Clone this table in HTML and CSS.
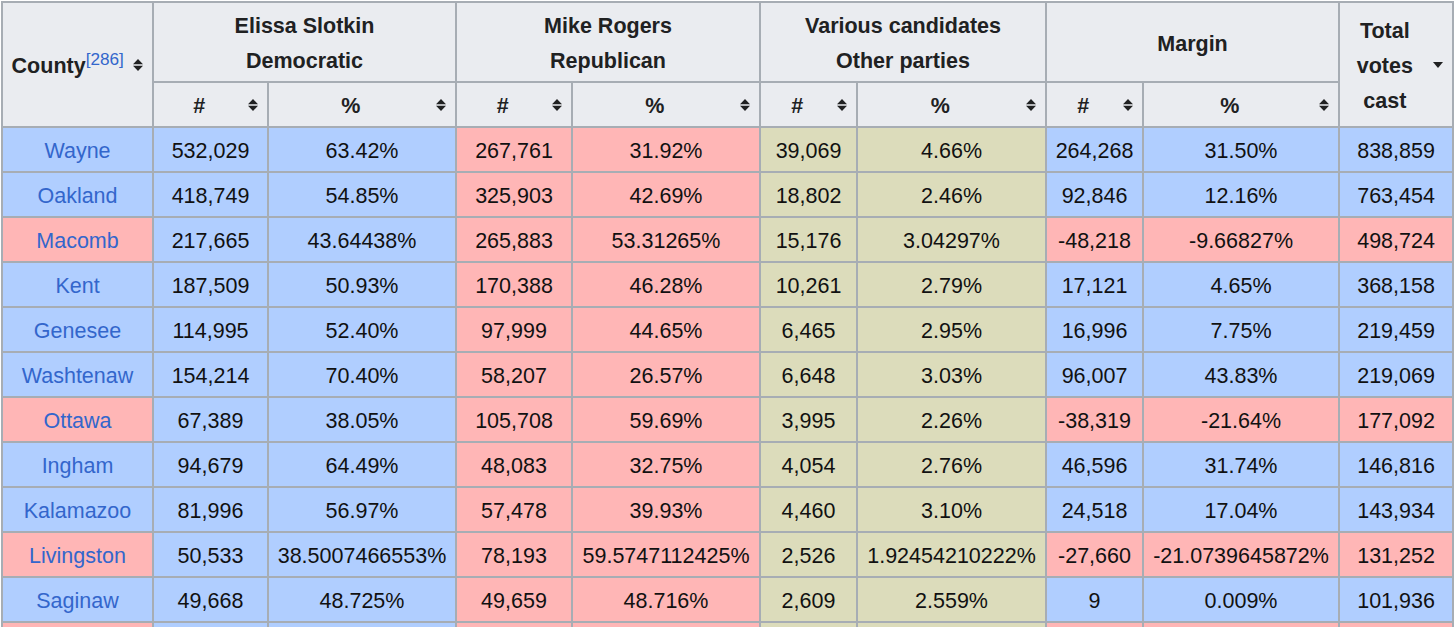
FILE: index.html
```html
<!DOCTYPE html>
<html lang="en">
<head>
<meta charset="utf-8">
<title>2024 United States Senate election in Michigan – results by county</title>
<link rel="stylesheet" href="styles.css">
</head>
<body>
<table class="results">
  <colgroup>
    <col class="w-county"><col class="w-num"><col class="w-pct">
    <col class="w-num2"><col class="w-pct"><col class="w-num3">
    <col class="w-pct3"><col class="w-num3"><col class="w-pct4"><col class="w-total">
  </colgroup>
  <thead>
    <tr class="hrow1">
      <th rowspan="2" class="sortable">County<sup class="ref"><a href="#">[286]</a></sup><svg class="sort" viewBox="0 0 10 12" width="10" height="12"><path d="M0 5.3 L5 0 L10 5.3 Z M0 6.7 L10 6.7 L5 12 Z"/></svg></th>
      <th colspan="2">Elissa Slotkin<br>Democratic</th>
      <th colspan="2">Mike Rogers<br>Republican</th>
      <th colspan="2">Various candidates<br>Other parties</th>
      <th colspan="2">Margin</th>
      <th rowspan="2" class="sortable">Total votes cast<svg class="sort" viewBox="0 0 10 6" width="10" height="6"><path d="M0 0 L10 0 L5 6 Z"/></svg></th>
    </tr>
    <tr class="hrow2">
      <th class="sortable">#<svg class="sort" viewBox="0 0 10 12" width="10" height="12"><path d="M0 5.3 L5 0 L10 5.3 Z M0 6.7 L10 6.7 L5 12 Z"/></svg></th>
      <th class="sortable">%<svg class="sort" viewBox="0 0 10 12" width="10" height="12"><path d="M0 5.3 L5 0 L10 5.3 Z M0 6.7 L10 6.7 L5 12 Z"/></svg></th>
      <th class="sortable">#<svg class="sort" viewBox="0 0 10 12" width="10" height="12"><path d="M0 5.3 L5 0 L10 5.3 Z M0 6.7 L10 6.7 L5 12 Z"/></svg></th>
      <th class="sortable">%<svg class="sort" viewBox="0 0 10 12" width="10" height="12"><path d="M0 5.3 L5 0 L10 5.3 Z M0 6.7 L10 6.7 L5 12 Z"/></svg></th>
      <th class="sortable">#<svg class="sort" viewBox="0 0 10 12" width="10" height="12"><path d="M0 5.3 L5 0 L10 5.3 Z M0 6.7 L10 6.7 L5 12 Z"/></svg></th>
      <th class="sortable">%<svg class="sort" viewBox="0 0 10 12" width="10" height="12"><path d="M0 5.3 L5 0 L10 5.3 Z M0 6.7 L10 6.7 L5 12 Z"/></svg></th>
      <th class="sortable">#<svg class="sort" viewBox="0 0 10 12" width="10" height="12"><path d="M0 5.3 L5 0 L10 5.3 Z M0 6.7 L10 6.7 L5 12 Z"/></svg></th>
      <th class="sortable">%<svg class="sort" viewBox="0 0 10 12" width="10" height="12"><path d="M0 5.3 L5 0 L10 5.3 Z M0 6.7 L10 6.7 L5 12 Z"/></svg></th>
    </tr>
  </thead>
  <tbody>
    <tr>
      <td class="d"><a href="#">Wayne</a></td><td class="d">532,029</td><td class="d">63.42%</td>
      <td class="r">267,761</td><td class="r">31.92%</td><td class="o">39,069</td><td class="o">4.66%</td>
      <td class="d">264,268</td><td class="d">31.50%</td><td class="d">838,859</td>
    </tr>
    <tr>
      <td class="d"><a href="#">Oakland</a></td><td class="d">418,749</td><td class="d">54.85%</td>
      <td class="r">325,903</td><td class="r">42.69%</td><td class="o">18,802</td><td class="o">2.46%</td>
      <td class="d">92,846</td><td class="d">12.16%</td><td class="d">763,454</td>
    </tr>
    <tr>
      <td class="r"><a href="#">Macomb</a></td><td class="d">217,665</td><td class="d">43.64438%</td>
      <td class="r">265,883</td><td class="r">53.31265%</td><td class="o">15,176</td><td class="o">3.04297%</td>
      <td class="r">-48,218</td><td class="r">-9.66827%</td><td class="r">498,724</td>
    </tr>
    <tr>
      <td class="d"><a href="#">Kent</a></td><td class="d">187,509</td><td class="d">50.93%</td>
      <td class="r">170,388</td><td class="r">46.28%</td><td class="o">10,261</td><td class="o">2.79%</td>
      <td class="d">17,121</td><td class="d">4.65%</td><td class="d">368,158</td>
    </tr>
    <tr>
      <td class="d"><a href="#">Genesee</a></td><td class="d">114,995</td><td class="d">52.40%</td>
      <td class="r">97,999</td><td class="r">44.65%</td><td class="o">6,465</td><td class="o">2.95%</td>
      <td class="d">16,996</td><td class="d">7.75%</td><td class="d">219,459</td>
    </tr>
    <tr>
      <td class="d"><a href="#">Washtenaw</a></td><td class="d">154,214</td><td class="d">70.40%</td>
      <td class="r">58,207</td><td class="r">26.57%</td><td class="o">6,648</td><td class="o">3.03%</td>
      <td class="d">96,007</td><td class="d">43.83%</td><td class="d">219,069</td>
    </tr>
    <tr>
      <td class="r"><a href="#">Ottawa</a></td><td class="d">67,389</td><td class="d">38.05%</td>
      <td class="r">105,708</td><td class="r">59.69%</td><td class="o">3,995</td><td class="o">2.26%</td>
      <td class="r">-38,319</td><td class="r">-21.64%</td><td class="r">177,092</td>
    </tr>
    <tr>
      <td class="d"><a href="#">Ingham</a></td><td class="d">94,679</td><td class="d">64.49%</td>
      <td class="r">48,083</td><td class="r">32.75%</td><td class="o">4,054</td><td class="o">2.76%</td>
      <td class="d">46,596</td><td class="d">31.74%</td><td class="d">146,816</td>
    </tr>
    <tr>
      <td class="d"><a href="#">Kalamazoo</a></td><td class="d">81,996</td><td class="d">56.97%</td>
      <td class="r">57,478</td><td class="r">39.93%</td><td class="o">4,460</td><td class="o">3.10%</td>
      <td class="d">24,518</td><td class="d">17.04%</td><td class="d">143,934</td>
    </tr>
    <tr>
      <td class="r"><a href="#">Livingston</a></td><td class="d">50,533</td><td class="d">38.5007466553%</td>
      <td class="r">78,193</td><td class="r">59.5747112425%</td><td class="o">2,526</td><td class="o">1.92454210222%</td>
      <td class="r">-27,660</td><td class="r">-21.0739645872%</td><td class="r">131,252</td>
    </tr>
    <tr>
      <td class="d"><a href="#">Saginaw</a></td><td class="d">49,668</td><td class="d">48.725%</td>
      <td class="r">49,659</td><td class="r">48.716%</td><td class="o">2,609</td><td class="o">2.559%</td>
      <td class="d">9</td><td class="d">0.009%</td><td class="d">101,936</td>
    </tr>
    <tr>
      <td class="r"></td><td class="d"></td><td class="d"></td>
      <td class="r"></td><td class="r"></td><td class="o"></td><td class="o"></td>
      <td class="r"></td><td class="r"></td><td class="r"></td>
    </tr>
  </tbody>
</table>
</body>
</html>
```

FILE: styles.css
```css
html, body {
  margin: 0;
  padding: 0;
  background: #ffffff;
}

body {
  font-family: "Liberation Sans", Arial, sans-serif;
  color: #202122;
  overflow: hidden;
}

.results {
  margin: 1px 0 0 1px;
  width: 1453px;
  table-layout: fixed;
  border-collapse: separate;
  border-spacing: 0;
  border-top: 2px solid #a7adb4;
  border-left: 2px solid #a7adb4;
  font-size: 21.5px;
  line-height: 35px;
}

.w-county { width: 151px; }
.w-num { width: 115px; }
.w-pct { width: 188px; }
.w-num2 { width: 116px; }
.w-num3 { width: 97px; }
.w-pct3 { width: 189px; }
.w-pct4 { width: 196px; }
.w-total { width: 114px; }

.results th,
.results td {
  box-sizing: border-box;
  border-right: 2px solid #a7adb4;
  border-bottom: 2px solid #a7adb4;
  padding: 6px 8.6px 2px;
  text-align: center;
  vertical-align: middle;
  white-space: nowrap;
}

.results td {
  color: #111111;
}

.results th {
  background: #eaecf0;
  font-weight: bold;
  position: relative;
}

.results th.sortable {
  padding-right: 31px;
  white-space: normal;
}

.hrow1 { height: 80px; }
.hrow2 { height: 45px; }
.results tbody tr { height: 45px; }

.sort {
  position: absolute;
  right: 9px;
  top: 50%;
  transform: translateY(-50%);
  fill: #202122;
}

.ref {
  font-size: 80%;
  font-weight: normal;
  line-height: 1;
  vertical-align: super;
}

.ref a,
.results td a {
  color: #3366cc;
  text-decoration: none;
}

.d { background: #b0ceff; }
.r { background: #ffb6b6; }
.o { background: #dcdcbb; }
```
